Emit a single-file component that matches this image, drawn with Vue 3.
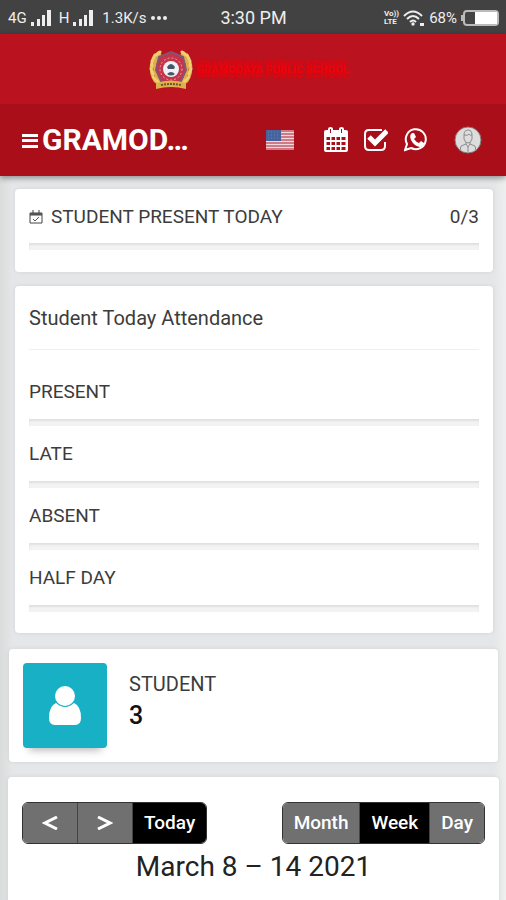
<template>
    <div class="page">
        <div class="status-bar">
            <div class="status-left">
                <span>4G</span>
                <svg class="signal" viewBox="0 0 21 18" aria-hidden="true">
                    <path d="M0 13h3v4H0zM6 10h3v7H6zM11 6h3v11h-3zM16 1h4v16h-4z" fill="#eee" />
                </svg>
                <span class="network">H</span>
                <svg class="signal" viewBox="0 0 21 18" aria-hidden="true">
                    <path d="M0 13h3v4H0zM6 10h3v7H6zM11 6h3v11h-3zM16 1h4v16h-4z" fill="#eee" />
                </svg>
                <span class="speed">1.3K/s</span>
                <svg class="dots" viewBox="0 0 18 6" aria-hidden="true">
                    <g fill="#eee"><circle cx="3" cy="3" r="2" /><circle cx="9" cy="3" r="2" /><circle cx="15" cy="3" r="2" /></g>
                </svg>
            </div>
            <span class="clock">3:30 PM</span>
            <div class="status-right">
                <span class="volte"><span>Vo))</span><span>LTE</span></span>
                <svg class="wifi" viewBox="0 0 22 17" aria-hidden="true">
                    <g fill="none" stroke="#eee" stroke-width="2">
                        <path d="M1 6Q10-3 19 6" />
                        <path d="M4 9q6-6 12 0" />
                        <path d="M7 12q3-3 6 0" />
                    </g>
                    <circle cx="10" cy="14" r="1.7" fill="#eee" />
                    <path d="M17 13h4v3h-4z" fill="#eee" />
                </svg>
                <span>68%</span>
                <svg class="battery" viewBox="0 0 38 18" aria-hidden="true">
                    <rect x="3" y="2" width="34" height="14" rx="3" fill="#444" stroke="#bbb" stroke-width="2" />
                    <path d="M0 6h2v6H0z" fill="#bbb" />
                    <path d="M14 3h22v12H14z" fill="#fff" />
                </svg>
            </div>
        </div>

        <header class="header">
            <div class="brand">
                <svg class="crest" viewBox="0 0 44 40" aria-hidden="true">
                    <g fill="none" stroke="#dfae4b" stroke-linecap="round">
                        <path d="M10 3Q1 11 3 22q2 10 9 13M34 3q9 8 7 19-2 10-9 13" stroke-width="4" stroke-dasharray="3 4" />
                        <path d="M11 5Q4 12 6 22q2 8 7 12M33 5q7 7 5 17-2 8-7 12" stroke-width="3" />
                        <path d="M11 2L7 5M6 5l-2 4M3 11v5M2 19l2 5M4 27l5 5M33 2l4 3M38 5l2 4M41 11v5M42 19l-2 5M40 27l-5 5" stroke="#efcf6f" stroke-width="3" />
                    </g>
                    <path d="M22 2l12 5 3 13-5 11-10 4-10-4-5-11 3-13z" fill="#c4354a" stroke="#855474" stroke-width="2" />
                    <circle cx="22" cy="19" r="11" fill="none" stroke="#e8a3a7" stroke-dasharray="2 2" />
                    <circle cx="22" cy="19" r="8" fill="#eef1f5" />
                    <path d="M18 17q4-6 8 0l-1 2h-6zM18 24q4-4 8 0-4 3-8 0z" fill="#465666" />
                    <path d="M7 33q15-5 30 0v6q-15-4-30 0z" fill="#dcb04b" />
                    <path d="M12 35q10-2 20 0" fill="none" stroke="#70552e" stroke-width="2" stroke-dasharray="2 1" />
                </svg>
                <span class="school-name">GRAMODAYA PUBLIC SCHOOL</span>
            </div>
            <nav class="navbar">
                <button class="menu" aria-label="Menu">
                    <svg viewBox="0 0 16 16"><path d="M0 2h16v3H0zM0 7h16v3H0zM0 13h16v3H0z" fill="#fff" /></svg>
                </button>
                <h1>{{ shortTitle }}</h1>
                <button class="language" aria-label="Language">
                    <svg viewBox="0 0 28 20">
                        <path d="M0 0h28v20H0z" fill="#f0d9df" />
                        <path d="M0 1h28M0 4h28M0 7h28M0 10h28M0 13h28M0 16h28M0 19h28" stroke="#c65b68" stroke-width="1.5" />
                        <path d="M0 0h15v11H0z" fill="#47639d" />
                        <path d="M2 2h12M2 5h12M2 8h12" stroke="#6580b0" stroke-dasharray="1 2" />
                    </svg>
                </button>
                <div class="nav-icons">
                    <button aria-label="Calendar">
                        <svg viewBox="0 0 24 26">
                            <path fill-rule="evenodd" fill="#fff" d="M2 3h2V2q0-2 2.500-2T9 2v1h6V2q0-2 2.500-2T20 2v1h2q2 0 2 2v18q0 2-2 2H2q-2 0-2-2V5q0-2 2-2zm.5 7v3h3.500v-3zm5 0v3H11v-3zm5 0v3H16v-3zm5 0v3h4v-3zm-15 5v3h3.500v-3zm5 0v3H11v-3zm5 0v3H16v-3zm5 0v3h4v-3zm-15 5v3h3.500v-3zm5 0v3H11v-3zm5 0v3H16v-3zm5 0v3h4v-3zM6 2v4h1V2zm11 0v4h1V2z" />
                        </svg>
                    </button>
                    <button aria-label="Tasks">
                        <svg viewBox="0 0 24 26">
                            <path d="M18 3H5Q1 3 1 7v12q0 4 4 4h12q4 0 4-4v-4" fill="none" stroke="#fff" stroke-width="2" />
                            <path d="M5 10l6 6L23 4" fill="none" stroke="#fff" stroke-width="5" />
                        </svg>
                    </button>
                    <button aria-label="WhatsApp">
                        <svg viewBox="0 0 24 26">
                            <path d="M1 23l2-6a10 10 0 1 1 4 4z" fill="none" stroke="#fff" stroke-width="2" />
                            <path d="M8 6h2l2 4-2 2q2 3 5 4l2-2 3 2q0 4-4 4-6-1-9-7-2-5 1-7z" fill="#fff" />
                        </svg>
                    </button>
                </div>
                <button class="profile" aria-label="Profile">
                    <svg viewBox="0 0 28 28">
                        <circle cx="14" cy="14" r="13" fill="#ddd" stroke="#817c7c" />
                        <path d="M10 9q0-5 4-5t4 5v4q-1 4-4 4t-4-4zM10 9q4 1 5-1 1 2 3 1M12 16v2l-5 2-1 5M16 16v2l5 2 1 5M12 18l2 3 2-3M14 21v5" fill="none" stroke="#8c8c8c" />
                    </svg>
                </button>
            </nav>
        </header>

        <main>
            <section class="card present">
                <div class="present-row">
                    <svg viewBox="0 0 14 14" aria-hidden="true">
                        <path d="M1 3h12v10H1zM1 5h12M4 0v4M10 0v4" fill="none" stroke="#444" />
                        <path d="M1 3h12v2H1z" fill="#555" />
                        <path d="M4 9l2 2 4-4" fill="none" stroke="#555" />
                    </svg>
                    <span>STUDENT PRESENT TODAY</span>
                    <span class="count">0/3</span>
                </div>
                <div class="progress"></div>
            </section>

            <section class="card attendance">
                <h2>Student Today Attendance</h2>
                <div v-for="item in attendance" :key="item" class="attendance-row">
                    <p>{{ item }}</p>
                    <div class="progress"></div>
                </div>
            </section>

            <section class="card student">
                <div class="student-icon">
                    <svg viewBox="0 0 34 42" aria-hidden="true">
                        <circle cx="17" cy="11" r="10" fill="#fff" />
                        <path d="M8 18q9 8 18 0 7 3 7 15 0 7-6 7H7q-6 0-6-7Q1 21 8 18z" fill="#fff" />
                    </svg>
                </div>
                <div>
                    <p>STUDENT</p>
                    <strong>3</strong>
                </div>
            </section>

            <section class="card calendar">
                <div class="toolbar">
                    <div class="button-group">
                        <button class="arrow" aria-label="Previous">
                            <svg viewBox="0 0 16 14"><path d="M15 1L3 7l12 6" fill="none" stroke="#fff" stroke-width="3" /></svg>
                        </button>
                        <button class="arrow" aria-label="Next">
                            <svg viewBox="0 0 16 14"><path d="M1 1l12 6-12 6" fill="none" stroke="#fff" stroke-width="3" /></svg>
                        </button>
                        <button class="active">Today</button>
                    </div>
                    <div class="button-group">
                        <button v-for="view in views" :key="view" :class="{ active: view == currentView }" @click="currentView = view">
                            {{ view }}
                        </button>
                    </div>
                </div>
                <h2>March 8 – 14 2021</h2>
            </section>
        </main>
    </div>
</template>

<script setup>
import { ref } from 'vue';

const shortTitle = 'GRAMOD…';
const attendance = ['PRESENT', 'LATE', 'ABSENT', 'HALF DAY'];
const views = ['Month', 'Week', 'Day'];
const currentView = ref('Week');
</script>

<style>
body {
    margin: 0;
    background: #e4e6e7;
}
</style>

<style scoped>
.page {
    height: 100vh;
    overflow: hidden;
    font-family: Roboto, sans-serif;
    color: #3c3c3c;
    font-size: 19px;
    line-height: 24px;
    background: linear-gradient(90deg, #d9dcdb, #e4e6e7 12px, #e4e6e7 calc(100% - 12px), #eeefef);
}

.page * {
    box-sizing: border-box;
}

svg {
    display: block;
}

h1,
h2,
p {
    margin: 0;
    font-weight: 400;
}

button {
    padding: 0;
    border: 0;
    background: none;
    font: inherit;
    color: #fff;
    cursor: pointer;
}

.status-bar {
    display: grid;
    grid-template-columns: 1fr auto 1fr;
    align-items: center;
    height: 34px;
    padding: 2px 7px 0 8px;
    background: #424242;
    color: #eee;
    font-size: 15px;
}

.status-left,
.status-right {
    display: flex;
    align-items: center;
}

.status-right {
    justify-content: flex-end;
    gap: 4px;
}

.signal {
    width: 21px;
    height: 18px;
    margin-left: 4px;
}

.network {
    margin-left: 7px;
}

.speed {
    margin-left: 8px;
}

.dots {
    width: 18px;
    height: 6px;
    margin-left: 3px;
}

.clock {
    font-size: 18px;
}

.volte {
    display: flex;
    flex-direction: column;
    font-size: 8px;
    font-weight: 700;
    line-height: 8px;
}

.wifi {
    width: 22px;
    height: 17px;
}

.battery {
    width: 38px;
    height: 18px;
}

.header {
    position: relative;
    box-shadow: 0 2px 6px rgba(0, 0, 0, 0.4);
}

.brand {
    display: flex;
    align-items: center;
    justify-content: center;
    gap: 3px;
    height: 70px;
    padding: 2px 8px 0 0;
    background: #ba121e;
}

.crest {
    width: 44px;
    height: 40px;
}

.school-name {
    color: #f00008;
    font-size: 11px;
    font-weight: 700;
    white-space: nowrap;
    text-shadow: 0 -5px 1px #e6040c, 0 5px 1px #e6040c;
}

.navbar {
    display: flex;
    align-items: center;
    height: 72px;
    padding: 0 24px 0 22px;
    background: #a90e19;
}

.menu svg {
    width: 16px;
    height: 16px;
}

h1 {
    flex: 1;
    margin-left: 4px;
    color: #fff;
    font-size: 30px;
    font-weight: 700;
    line-height: 36px;
}

.language svg {
    width: 28px;
    height: 20px;
}

.nav-icons {
    display: flex;
    gap: 16px;
    margin: 0 26px 0 30px;
}

.nav-icons svg {
    width: 24px;
    height: 26px;
}

.profile svg {
    width: 28px;
    height: 28px;
}

main {
    display: flex;
    flex-direction: column;
    padding: 13px 7px 0 8px;
}

.card {
    background: #fff;
    border-radius: 4px;
    box-shadow: 0 0 4px rgba(0, 0, 0, 0.08);
}

.present {
    margin: 0 6px 14px 7px;
    padding: 16px 14px 22px;
}

.present-row {
    display: flex;
    align-items: center;
    gap: 8px;
}

.present-row svg {
    width: 14px;
    height: 14px;
}

.count {
    margin-left: auto;
}

.progress {
    height: 7px;
    background: #f3f3f3;
    box-shadow: inset 0 2px 2px rgba(0, 0, 0, 0.08);
}

.present .progress {
    margin-top: 14px;
}

.attendance {
    margin: 0 6px 16px 7px;
    padding: 20px 14px 21px;
}

.attendance h2 {
    margin-bottom: 8px;
    padding-bottom: 19px;
    border-bottom: 1px solid #f0f0f0;
    font-size: 20px;
}

.attendance-row {
    padding-top: 22px;
}

.attendance-row + .attendance-row {
    padding-top: 16px;
}

.attendance-row p {
    margin-bottom: 15px;
}

.student {
    display: flex;
    gap: 22px;
    margin: 0 1px 15px;
    padding: 14px;
}

.student-icon {
    display: flex;
    align-items: center;
    justify-content: center;
    width: 84px;
    height: 85px;
    border-radius: 4px;
    background: #17b0c5;
    box-shadow: 0 8px 8px -6px rgba(0, 0, 0, 0.3);
}

.student-icon svg {
    width: 34px;
    height: 42px;
}

.student p {
    margin-top: 9px;
    font-size: 20px;
}

.student strong {
    display: block;
    margin-top: 8px;
    color: #111;
    font-size: 25px;
    font-weight: 500;
}

.calendar {
    height: 180px;
    padding: 25px 14px;
}

.toolbar {
    display: flex;
    justify-content: space-between;
}

.button-group {
    display: flex;
    overflow: hidden;
    border: 1px solid #333;
    border-radius: 6px;
}

.button-group button {
    height: 40px;
    padding: 0 11px;
    background: #707070;
    font-size: 19px;
    font-weight: 500;
}

.button-group button + button {
    border-left: 1px solid #444;
}

.button-group .arrow {
    padding: 0 19px;
}

.arrow svg {
    width: 16px;
    height: 14px;
}

.button-group .active {
    background: #000;
}

.calendar h2 {
    margin-top: 5px;
    color: #222;
    font-size: 28px;
    line-height: 36px;
    text-align: center;
}
</style>
